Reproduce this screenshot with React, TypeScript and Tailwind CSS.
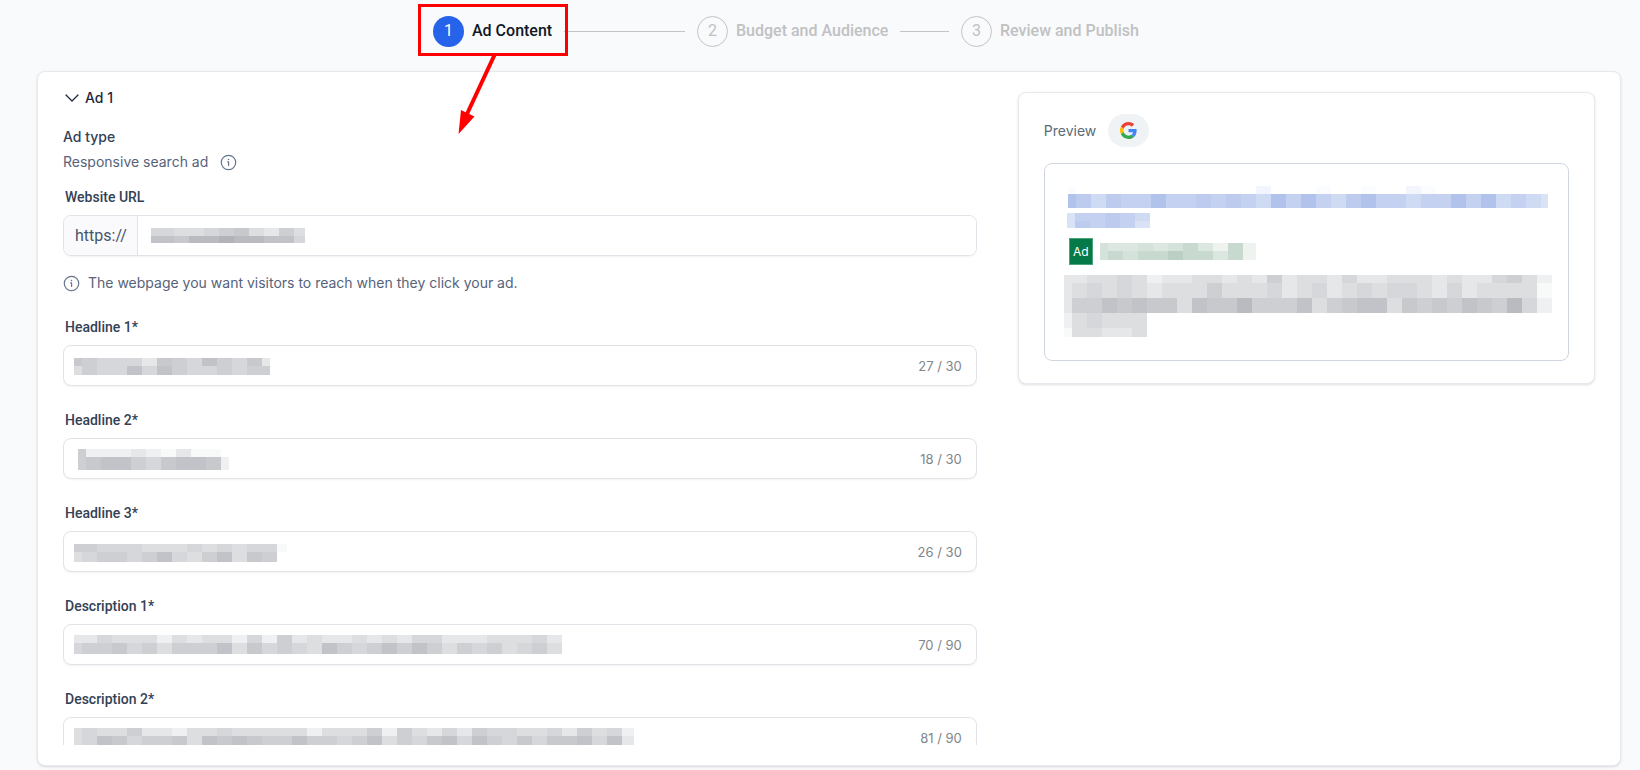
import React from "react";
import { ChevronDown } from "lucide-react";

const SHADES: Record<string, string> = {
  "0": "#f8f9f9", "1": "#eff0f1", "2": "#e6e7e9", "3": "#dddee0", "4": "#d6d7da",
  "5": "#cecfd3", "6": "#c8c9cd", "7": "#c2c3c8", "8": "#b9bbc0", "9": "#b2b3b8",
  v: "#fafcff", w: "#f2f5fd", a: "#dae2f6", b: "#cfdaf3", c: "#c4d1f0", d: "#bccbee", e: "#b2c3eb",
  m: "#eef3f0", n: "#dde7e1", o: "#d5e2db", p: "#c8d9cf", q: "#bbcfc4",
};

type MosaicRow = [height: number, cells: string];

/* Redaction mosaic: the first column is 8px wide, the others 15px. */
function Mosaic({ width, rows, className = "" }: { width: number; rows: MosaicRow[]; className?: string }) {
  const height = rows.reduce((sum, [h]) => sum + h, 0);
  let y = 0;
  return (
    <svg width={width} height={height} viewBox={`0 0 ${width} ${height}`} shapeRendering="crispEdges" aria-hidden="true" className={`block shrink-0 ${className}`}>
      {rows.map(([h, cells], r) => {
        const top = y;
        y += h;
        return cells.split("").map((c, i) =>
          c === " " ? null : (
            <rect key={`${r}-${i}`} x={i === 0 ? 0 : 8 + (i - 1) * 15} y={top} width={i === 0 ? 8 : 15} height={h} fill={SHADES[c]} />
          )
        );
      })}
    </svg>
  );
}

function InfoIcon() {
  return (
    <svg viewBox="0 0 17 17" className="size-[17px] shrink-0" fill="none" stroke="#64748b" aria-hidden="true">
      <circle cx="8.5" cy="8.5" r="7.2" strokeWidth="1.2" />
      <path d="M7.6 7.8h1v3.600" strokeWidth="1.2" strokeLinecap="round" strokeLinejoin="round" />
      <circle cx="8.5" cy="5.5" r="0.800" fill="#64748b" stroke="none" />
    </svg>
  );
}

function Step({ n, title, active, last, children }: { n: number; title: string; active?: boolean; last?: boolean; children?: React.ReactNode }) {
  return (
    <li className="relative flex items-center" aria-current={active ? "step" : undefined}>
      <span
        className={
          active
            ? "flex size-[31px] shrink-0 items-center justify-center rounded-full bg-[#2563eb] text-base text-white"
            : "flex size-[31px] shrink-0 items-center justify-center rounded-full border border-[#c2c3c5] text-base text-[#c0c1c2]"
        }
      >
        {n}
      </span>
      <span className={active ? "ml-2 shrink-0 text-base font-medium text-[#111827]" : "ml-2 shrink-0 text-base font-medium text-[#c0c1c2]"}>{title}</span>
      {!last && <span className="mr-3 ml-3 h-px flex-1 bg-[#c2c3c5]" />}
      {children}
    </li>
  );
}

type Field = { id: string; label: string; count: string; width: number; rows: MosaicRow[]; place: string };

const FIELDS: Field[] = [
  { id: "headline-1", label: "Headline 1*", count: "27 / 30", width: 196, place: "top-3 left-2.5", rows: [[8, "65444265475462"], [9, "35447475445455"]] },
  { id: "headline-2", label: "Headline 2*", count: "18 / 30", width: 151, place: "top-2.5 left-3.5", rows: [[8, "5111210200 "], [13, "56775467761"]] },
  { id: "headline-3", label: "Headline 3*", count: "26 / 30", width: 213, place: "top-3 left-2.5", rows: [[8, "554443334343440"], [10, "34554574357365"]] },
  { id: "description-1", label: "Description 1*", count: "70 / 90", width: 488, place: "top-2.5 left-2.5", rows: [[8, "224333132331415232232324422233342"], [11, "455645355573645437545757535453453"]] },
  { id: "description-2", label: "Description 2*", count: "81 / 90", width: 560, place: "top-2.5 left-2.5", rows: [[8, "34335221334333331333515324254433425341"], [10, "34764556376765575545735467475464667472"]] },
];

function CountedField({ field }: { field: Field }) {
  return (
    <div className="mt-6">
      <label htmlFor={field.id} className="block pl-0.5 font-['Roboto',sans-serif] text-sm leading-5 font-medium text-[#334155]">
        {field.label}
      </label>
      <div className="relative mt-2 flex h-[41px] items-center rounded-lg border border-[#e2e3e8] bg-white pr-3.5 shadow-xs">
        <input id={field.id} type="text" className="h-full min-w-0 flex-1 rounded-lg bg-transparent pl-3 text-sm outline-none" />
        <span className="text-[13px] leading-5 text-[#80868c]">{field.count}</span>
        <Mosaic width={field.width} rows={field.rows} className={`pointer-events-none absolute ${field.place}`} />
      </div>
    </div>
  );
}

function GoogleLogo() {
  return (
    <svg viewBox="0 0 48 48" className="size-[17px]" role="img" aria-label="Google">
      <path fill="#EA4335" d="M24 9.5c3.54 0 6.71 1.22 9.21 3.6l6.85-6.85C35.9 2.38 30.47 0 24 0 14.62 0 6.51 5.38 2.56 13.22l7.98 6.19C12.43 13.72 17.74 9.5 24 9.5z" />
      <path fill="#4285F4" d="M46.98 24.55c0-1.57-.15-3.09-.38-4.55H24v9.02h12.94c-.58 2.96-2.26 5.48-4.78 7.18l7.73 6c4.51-4.18 7.09-10.36 7.09-17.65z" />
      <path fill="#FBBC05" d="M10.53 28.59c-.48-1.45-.76-2.99-.76-4.59s.27-3.14.76-4.59l-7.98-6.19C.92 16.46 0 20.12 0 24c0 3.88.92 7.54 2.56 10.78l7.97-6.19z" />
      <path fill="#34A853" d="M24 48c6.48 0 11.93-2.13 15.89-5.81l-7.73-6c-2.15 1.45-4.92 2.3-8.16 2.3-6.26 0-11.57-4.22-13.47-9.91l-7.98 6.19C6.51 42.62 14.62 48 24 48z" />
    </svg>
  );
}

function Preview() {
  return (
    <section className="mt-5 self-start rounded-lg border border-[#e8e9ee] bg-white px-[25px] pt-[21px] pb-[22px] shadow-sm">
      <div className="flex items-center gap-3">
        <h2 className="text-sm leading-6 text-[#5b6b77]">Preview</h2>
        <button type="button" className="flex h-[33px] w-[41px] items-center justify-center rounded-full bg-[#f0f3f6]">
          <GoogleLogo />
        </button>
      </div>
      <div className="mt-4 overflow-hidden rounded-lg border border-[#d0d6e0] pt-[22px] pr-3 pb-[23px] pl-5">
        <Mosaic
          width={480}
          className="ml-[3px]"
          rows={[[8, "v            w   v  v  wv"], [14, "edbdccecc" + "dcdcbececbdeccbccecebcba"]]}
        />
        <Mosaic width={83} className="mt-[5px] ml-0.5" rows={[[8, "accdcb"], [7, "adcdca"]]} />
        <div className="mt-2.5 ml-1 flex items-center gap-[7px]">
          <span className="flex h-[27px] w-6 items-center justify-center border border-[#4ba37b] bg-[#057a48] text-xs text-white">Ad</span>
          <Mosaic width={156} rows={[[8, "onnonopnmpm"], [9, "opoppqppnpm"]]} />
        </div>
        <Mosaic
          width={488}
          className="mt-2.5 -ml-px"
          rows={[
            [8, "223343122332325233242233323224531"],
            [15, "234343233353334234234344324233330"],
            [15, "255767663766855573567736565765841"],
            [15, "134333"],
            [9, "033223"],
          ]}
        />
      </div>
    </section>
  );
}

export default function App() {
  return (
    <main className="flex h-screen min-h-[600px] flex-col bg-[#f9fafc] pr-[19px] pb-1 pl-[37px] font-['Inter',sans-serif]">
      <ol className="mx-auto grid h-[71px] w-full max-w-[792px] shrink-0 grid-cols-3 pb-[9px] font-['Roboto',sans-serif]">
        <Step n={1} title="Ad Content" active>
          <span className="pointer-events-none absolute top-1 -left-[15px] h-[52px] w-[150px] border-3 border-[#ff0000]" />
          <svg width="44" height="84" viewBox="0 0 44 84" className="pointer-events-none absolute top-[54px] left-6 z-10" aria-hidden="true">
            <path d="M37.5 1 10 60" stroke="#ff0000" strokeWidth="4" fill="none" />
            <path d="M4 56 17.5 62.500 1.500 80Z" fill="#ff0000" />
          </svg>
        </Step>
        <Step n={2} title="Budget and Audience" />
        <Step n={3} title="Review and Publish" last />
      </ol>

      <div className="flex min-h-0 flex-1 flex-col rounded-lg border border-[#e8e9ef] bg-white px-[25px] pb-5 shadow-sm">
        <div className="grid min-h-0 flex-1 grid-cols-[19fr_12fr] gap-x-[41px]">
          <form className="min-h-0 overflow-hidden pt-3.5">
            <button type="button" className="-ml-[3px] flex h-6 items-center gap-px text-sm font-medium text-[#1e293b]">
              <ChevronDown className="size-6" strokeWidth={1.3} />
              Ad 1
            </button>
            <h3 className="mt-[17px] text-sm leading-5 font-medium text-[#334155]">Ad type</h3>
            <p className="mt-[3px] flex items-center gap-3 text-sm leading-6 text-[#56637a]">
              Responsive search ad
              <InfoIcon />
            </p>
            <label htmlFor="website-url" className="mt-[13px] block pl-0.5 font-['Roboto',sans-serif] text-sm leading-5 font-medium text-[#334155]">
              Website URL
            </label>
            <div className="relative mt-2 flex h-[41px] items-stretch overflow-hidden rounded-lg border border-[#e2e3e8] shadow-xs">
              <span className="flex w-[74px] shrink-0 items-center border-r border-[#e2e3e8] bg-[#fafafc] pl-[11px] font-['Roboto',sans-serif] text-base text-[#475569]">https://</span>
              <input id="website-url" type="text" className="min-w-0 flex-1 bg-white pl-3 text-sm outline-none" />
              <Mosaic width={154} className="pointer-events-none absolute top-3 left-[87px]" rows={[[8, "44334563253"], [7, "77688988774"]]} />
            </div>
            <p className="mt-[17px] flex items-center gap-2 text-sm leading-5 text-[#56637a]">
              <InfoIcon />
              The webpage you want visitors to reach when they click your ad.
            </p>
            {FIELDS.map((f) => (
              <CountedField key={f.id} field={f} />
            ))}
          </form>
          <Preview />
        </div>
      </div>
    </main>
  );
}
